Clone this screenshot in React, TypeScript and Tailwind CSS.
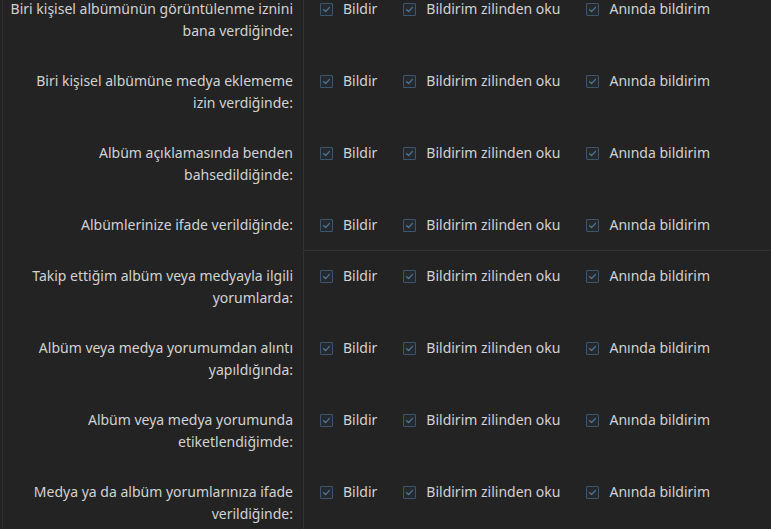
import React from 'react'

type Row = { label: string[] }

const SECTIONS: Row[][] = [
  [
    { label: ['Biri kişisel albümünün görüntülenme iznini', 'bana verdiğinde:'] },
    { label: ['Biri kişisel albümüne medya eklememe', 'izin verdiğinde:'] },
    { label: ['Albüm açıklamasında benden', 'bahsedildiğinde:'] },
    { label: ['Albümlerinize ifade verildiğinde:'] },
  ],
  [
    { label: ['Takip ettiğim albüm veya medyayla ilgili', 'yorumlarda:'] },
    { label: ['Albüm veya medya yorumumdan alıntı', 'yapıldığında:'] },
    { label: ['Albüm veya medya yorumunda', 'etiketlendiğimde:'] },
    { label: ['Medya ya da albüm yorumlarınıza ifade', 'verildiğinde:'] },
  ],
]

const OPTIONS = ['Bildir', 'Bildirim zilinden oku', 'Anında bildirim']

const Check: React.FC<{ label: string }> = ({ label }) => (
  <label className="flex items-center gap-[10px] cursor-pointer">
    <span className="w-[13px] h-[13px] border border-[#3b5670] bg-[#25292e] rounded-[1px] flex items-center justify-center">
      <svg width="9" height="9" viewBox="0 0 10 10" fill="none">
        <path d="M1.8 5.2 L4 7.3 L8.3 2.6" stroke="#4f7899" strokeWidth="1.4" strokeLinecap="round" strokeLinejoin="round" />
      </svg>
    </span>
    <span>{label}</span>
  </label>
)

export default function App() {
  return (
    <div
      className="w-[771px] h-[529px] overflow-hidden bg-[#232323] text-[#d2d2d2] text-[14px] leading-[22px]"
      style={{ fontFamily: '"Noto Sans", "Open Sans", sans-serif' }}
    >
      <div className="ml-[2px] border-l border-[#2e2e2e] -mt-[16px]">
        {SECTIONS.map((rows, si) => (
          <div key={si} className={si > 0 ? 'ml-[301px] border-t border-[#333333]' : ''}>
            <div className={si > 0 ? '-ml-[301px]' : ''}>
              {rows.map((row, ri) => (
                <div key={ri} className="flex">
                  <div className="w-[301px] shrink-0 border-r border-[#333333] pr-[10px] py-[14px] text-right">
                    {row.label.map((l, li) => (
                      <div key={li}>{l}</div>
                    ))}
                  </div>
                  <div className="flex-1 pl-[16px] py-[14px] flex items-start gap-[26px]">
                    {OPTIONS.map(o => (
                      <Check key={o} label={o} />
                    ))}
                  </div>
                </div>
              ))}
            </div>
          </div>
        ))}
      </div>
    </div>
  )
}
